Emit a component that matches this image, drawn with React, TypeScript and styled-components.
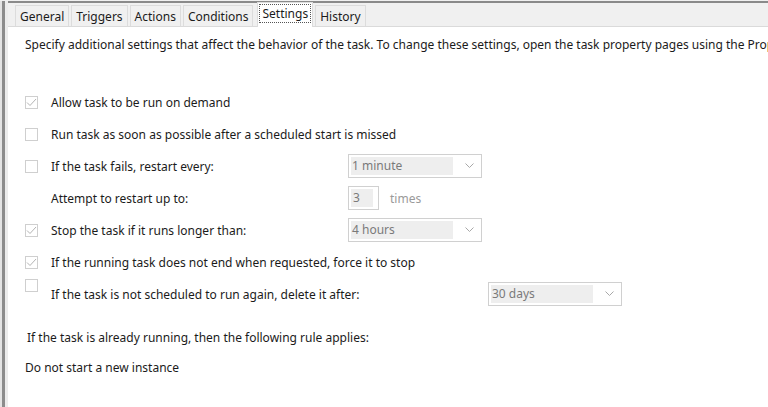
import * as React from 'react';
import styled, { createGlobalStyle, css } from 'styled-components';

const GlobalStyle = createGlobalStyle`
  html, body {
    margin: 0;
    padding: 0;
    background: #f0f0f0;
    overflow: hidden;
  }
  body {
    font-family: "Noto Sans", "Open Sans", "Liberation Sans", sans-serif;
    font-size: 12px;
    color: #1b1b1b;
  }
`;

const Frame = styled.div`
  display: flex;
  width: 768px;
  height: 407px;
  background: #f0f0f0;
  box-sizing: border-box;
  padding-top: 1px;
`;

const LeftEdge = styled.div`
  width: 8px;
  flex: none;
  box-sizing: border-box;
  border-left: 2px solid #e4e4e4;
  background: linear-gradient(to right, #8c8c8c 0, #8c8c8c 3px, #ececec 3px);
`;

const Main = styled.div`
  flex: 1;
  display: flex;
  flex-direction: column;
  min-width: 0;
  border-top: 2px solid #8a8a8a;
`;

const TabStrip = styled.div`
  height: 23px;
  flex: none;
  display: flex;
  align-items: flex-end;
  padding-left: 7px;
  gap: 2px;
  background: #f0f0f0;
  border-bottom: 1px solid #dadada;
`;

const Tab = styled.div<{ selected?: boolean }>`
  height: 21px;
  padding: 0 4px;
  box-sizing: border-box;
  display: flex;
  align-items: center;
  background: #f0f0f0;
  border: 1px solid #dcdcdc;
  border-bottom: none;
  color: #1b1b1b;
  white-space: nowrap;
  ${({ selected }) => selected && css`
    height: 25px;
    margin-bottom: -1px;
    margin-left: 2px;
    padding: 2px 2px 0;
    align-items: flex-start;
    background: #ffffff;
  `}
`;

const FocusLabel = styled.span`
  outline: 1px dotted #555;
  padding: 0 2px;
  line-height: 17px;
`;

const Panel = styled.div`
  flex: 1;
  background: #ffffff;
  padding: 10px 0 0 17px;
  display: flex;
  flex-direction: column;
  overflow: hidden;
`;

const Description = styled.div`
  white-space: nowrap;
  height: 16px;
  line-height: 16px;
  margin-bottom: 33px;
`;

const Row = styled.div`
  height: 32px;
  display: flex;
  align-items: center;
`;

const CheckSlot = styled.div<{ raised?: boolean }>`
  width: 26px;
  flex: none;
  display: flex;
  align-items: center;
  ${({ raised }) => raised && css`
    align-self: flex-start;
    padding-top: 1px;
  `}
`;

const Box = styled.div`
  width: 13px;
  height: 13px;
  box-sizing: border-box;
  border: 1px solid #cfcfcf;
  background: #ffffff;
  display: flex;
  align-items: center;
  justify-content: center;
`;

const Label = styled.span<{ width?: number }>`
  white-space: nowrap;
  ${({ width }) => width && css`
    width: ${width}px;
    flex: none;
  `}
`;

const Combo = styled.div`
  width: 134px;
  height: 24px;
  box-sizing: border-box;
  border: 1px solid #d0d0d0;
  background: #ffffff;
  display: flex;
  align-items: center;
  padding: 2px;
`;

const ComboValue = styled.div`
  flex: 1;
  height: 18px;
  background: #eeeeee;
  color: #7a7a7a;
  line-height: 18px;
  padding-left: 1px;
  margin-right: 12px;
`;

const Chevron = styled.svg`
  width: 9px;
  height: 6px;
  margin-right: 5px;
  flex: none;
`;

const SpinInput = styled.div`
  width: 31px;
  height: 24px;
  box-sizing: border-box;
  border: 1px solid #d0d0d0;
  padding: 2px;
`;

const SpinValue = styled.div`
  height: 18px;
  background: #eeeeee;
  color: #7a7a7a;
  line-height: 18px;
  padding-left: 2px;
  width: 20px;
`;

const Unit = styled.span`
  color: #9a9a9a;
  margin-left: 11px;
`;

const Note = styled.div<{ indent?: number }>`
  white-space: nowrap;
  padding-left: ${({ indent }) => indent ?? 0}px;
  height: 30px;
  line-height: 30px;
`;

const Notes = styled.div`
  margin-top: 13px;
  display: flex;
  flex-direction: column;
`;

const CheckMark = () => (
  <svg width="11" height="9" viewBox="0 0 11 9">
    <path d="M1 4.5 L4 7.5 L10 1" fill="none" stroke="#b4b4b4" strokeWidth="1" />
  </svg>
);

const ComboBox = ({ value }: { value: string }) => (
  <Combo>
    <ComboValue>{value}</ComboValue>
    <Chevron viewBox="0 0 9 6">
      <path d="M0.5 0.5 L4.5 4.5 L8.5 0.5" fill="none" stroke="#a8a8a8" strokeWidth="1" />
    </Chevron>
  </Combo>
);

const tabs = ['General', 'Triggers', 'Actions', 'Conditions', 'Settings', 'History'];

const App = () => (
  <>
    <GlobalStyle />
    <Frame>
      <LeftEdge />
      <Main>
        <TabStrip>
          {tabs.map((t) => (
            <Tab key={t} selected={t === 'Settings'}>
              {t === 'Settings' ? <FocusLabel>{t}</FocusLabel> : t}
            </Tab>
          ))}
        </TabStrip>
        <Panel>
          <Description>
            Specify additional settings that affect the behavior of the task. To change these settings, open the task property pages using the Properties command.
          </Description>
          <Row>
            <CheckSlot><Box><CheckMark /></Box></CheckSlot>
            <Label>Allow task to be run on demand</Label>
          </Row>
          <Row>
            <CheckSlot><Box /></CheckSlot>
            <Label>Run task as soon as possible after a scheduled start is missed</Label>
          </Row>
          <Row>
            <CheckSlot><Box /></CheckSlot>
            <Label width={297}>If the task fails, restart every:</Label>
            <ComboBox value="1 minute" />
          </Row>
          <Row>
            <CheckSlot />
            <Label width={297}>Attempt to restart up to:</Label>
            <SpinInput><SpinValue>3</SpinValue></SpinInput>
            <Unit>times</Unit>
          </Row>
          <Row>
            <CheckSlot><Box><CheckMark /></Box></CheckSlot>
            <Label width={297}>Stop the task if it runs longer than:</Label>
            <ComboBox value="4 hours" />
          </Row>
          <Row>
            <CheckSlot><Box><CheckMark /></Box></CheckSlot>
            <Label>If the running task does not end when requested, force it to stop</Label>
          </Row>
          <Row>
            <CheckSlot raised><Box /></CheckSlot>
            <Label width={437}>If the task is not scheduled to run again, delete it after:</Label>
            <ComboBox value="30 days" />
          </Row>
          <Notes>
            <Note indent={2}>If the task is already running, then the following rule applies:</Note>
            <Note>Do not start a new instance</Note>
          </Notes>
        </Panel>
      </Main>
    </Frame>
  </>
);

export default App;
